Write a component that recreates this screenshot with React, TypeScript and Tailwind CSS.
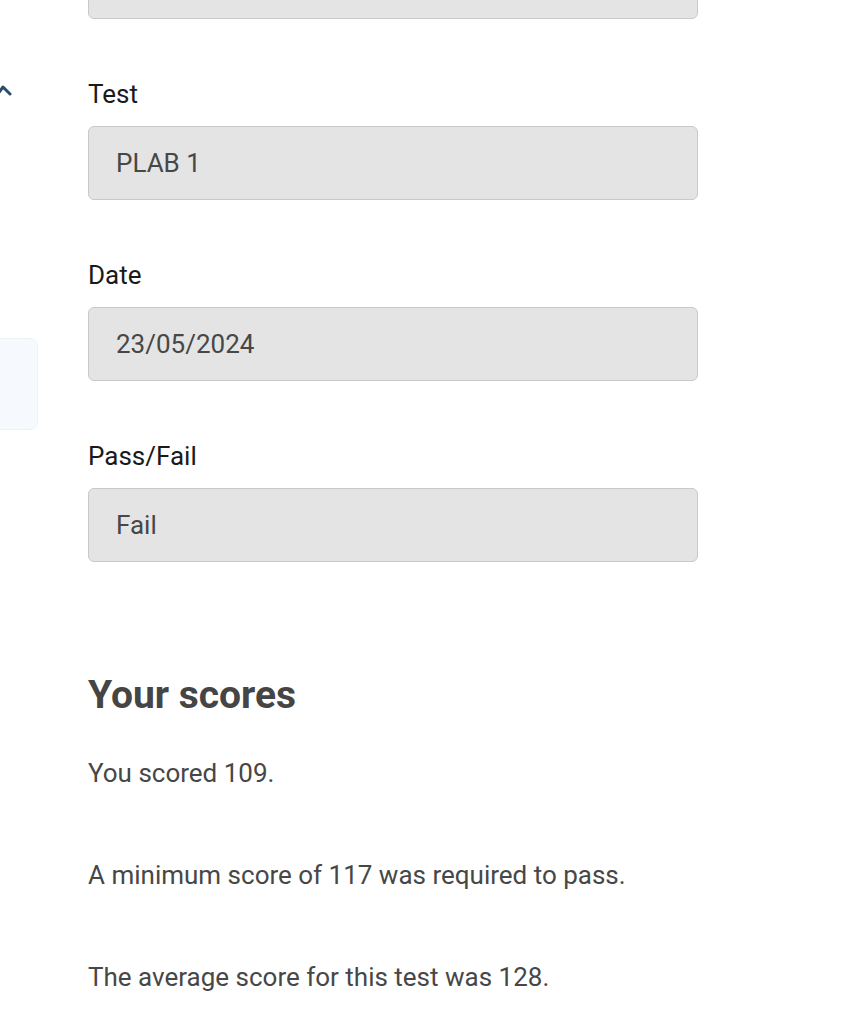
const FIELDS = [
  { label: "Test", value: "PLAB 1" },
  { label: "Date", value: "23/05/2024" },
  { label: "Pass/Fail", value: "Fail" },
];

const SCORES = [
  "You scored 109.",
  "A minimum score of 117 was required to pass.",
  "The average score for this test was 128.",
];

function ReadOnlyField({ label, value }: { label: string; value: string }) {
  return (
    <div className="mt-[60px]">
      <label className="block text-[26px] leading-[30px] text-[#1a1a1a]">{label}</label>
      <div className="mt-[17px] flex h-[74px] items-center rounded-[6px] border-[1.5px] border-[#c9c9c9] bg-[#e4e4e4] px-[27px] text-[26px] text-[#474747]">
        {value}
      </div>
    </div>
  );
}

export default function App() {
  return (
    <div className="relative min-h-[1024px] overflow-hidden bg-white font-['Roboto',sans-serif]">
      <div className="flex">
        {/* Side nav, cut off at the left edge */}
        <aside className="w-[40px] shrink-0">
          <svg className="ml-[-4px] mt-[83px] h-[14px] w-[18px]" viewBox="0 0 18 14" fill="none">
            <polyline
              points="1,12 7,4 14,11"
              stroke="#2b4d69"
              strokeWidth="3"
              strokeLinecap="round"
              strokeLinejoin="round"
            />
          </svg>
          <div className="ml-[-20px] mt-[241px] h-[92px] w-[58px] rounded-[8px] border border-[#eef3f8] bg-[#f6f9fd]" />
        </aside>

        <main className="ml-[48px] w-[610px] pb-10">
          <div className="-mt-[56px] h-[75px] rounded-[6px] border-[1.5px] border-[#c9c9c9] bg-[#e4e4e4]" />
          {FIELDS.map((f) => (
            <ReadOnlyField key={f.label} label={f.label} value={f.value} />
          ))}

          <h2 className="mt-[109px] text-[39px] font-bold leading-[48px] text-[#454545]">Your scores</h2>
          <div className="mt-[39px] flex flex-col gap-[72px]">
            {SCORES.map((s) => (
              <p key={s} className="text-[26px] leading-[30px] text-[#474747]">
                {s}
              </p>
            ))}
          </div>
        </main>
      </div>
    </div>
  );
}
